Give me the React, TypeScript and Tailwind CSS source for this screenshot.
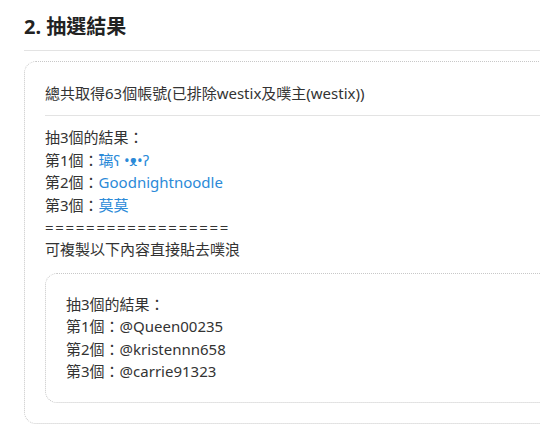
import React from "react";

const font = { fontFamily: '"Noto Sans", "Noto Sans CJK TC", sans-serif' };

export default function App() {
  return (
    <div className="w-[540px] h-[426px] overflow-hidden bg-white text-[#333]" style={font}>
      <div className="w-[640px] pl-[24px]">
        <h2 className="pt-[13px] pb-[9px] text-[20px] leading-[28px] font-bold text-[#222] border-b border-[#e3e3e3]">
          2. 抽選結果
        </h2>
        <div className="mt-[10px] rounded-xl border border-dotted border-[#c8c8c8] pl-[20px] pt-[20px] pb-[20px] text-[15px] leading-[22.4px]">
          <div>總共取得63個帳號(已排除westix及噗主(westix))</div>
          <div className="mt-[11px] border-t border-[#e3e3e3]" />
          <div className="mt-[10px]">
            <div>抽3個的結果：</div>
            <div>
              第1個：<span className="text-[#2b8ad8]">璃ʕ •ᴥ•ʔ</span>
            </div>
            <div>
              第2個：<span className="text-[#2b8ad8]">Goodnightnoodle</span>
            </div>
            <div>
              第3個：<span className="text-[#2b8ad8]">莫莫</span>
            </div>
            <div className="tracking-[1.7px]">==================</div>
            <div>可複製以下內容直接貼去噗浪</div>
          </div>
          <div className="mt-[12px] rounded-xl border border-dotted border-[#c8c8c8] pl-[20px] pt-[19px] pb-[20px]">
            <div>抽3個的結果：</div>
            <div>第1個：@Queen00235</div>
            <div>第2個：@kristennn658</div>
            <div>第3個：@carrie91323</div>
          </div>
        </div>
      </div>
    </div>
  );
}
